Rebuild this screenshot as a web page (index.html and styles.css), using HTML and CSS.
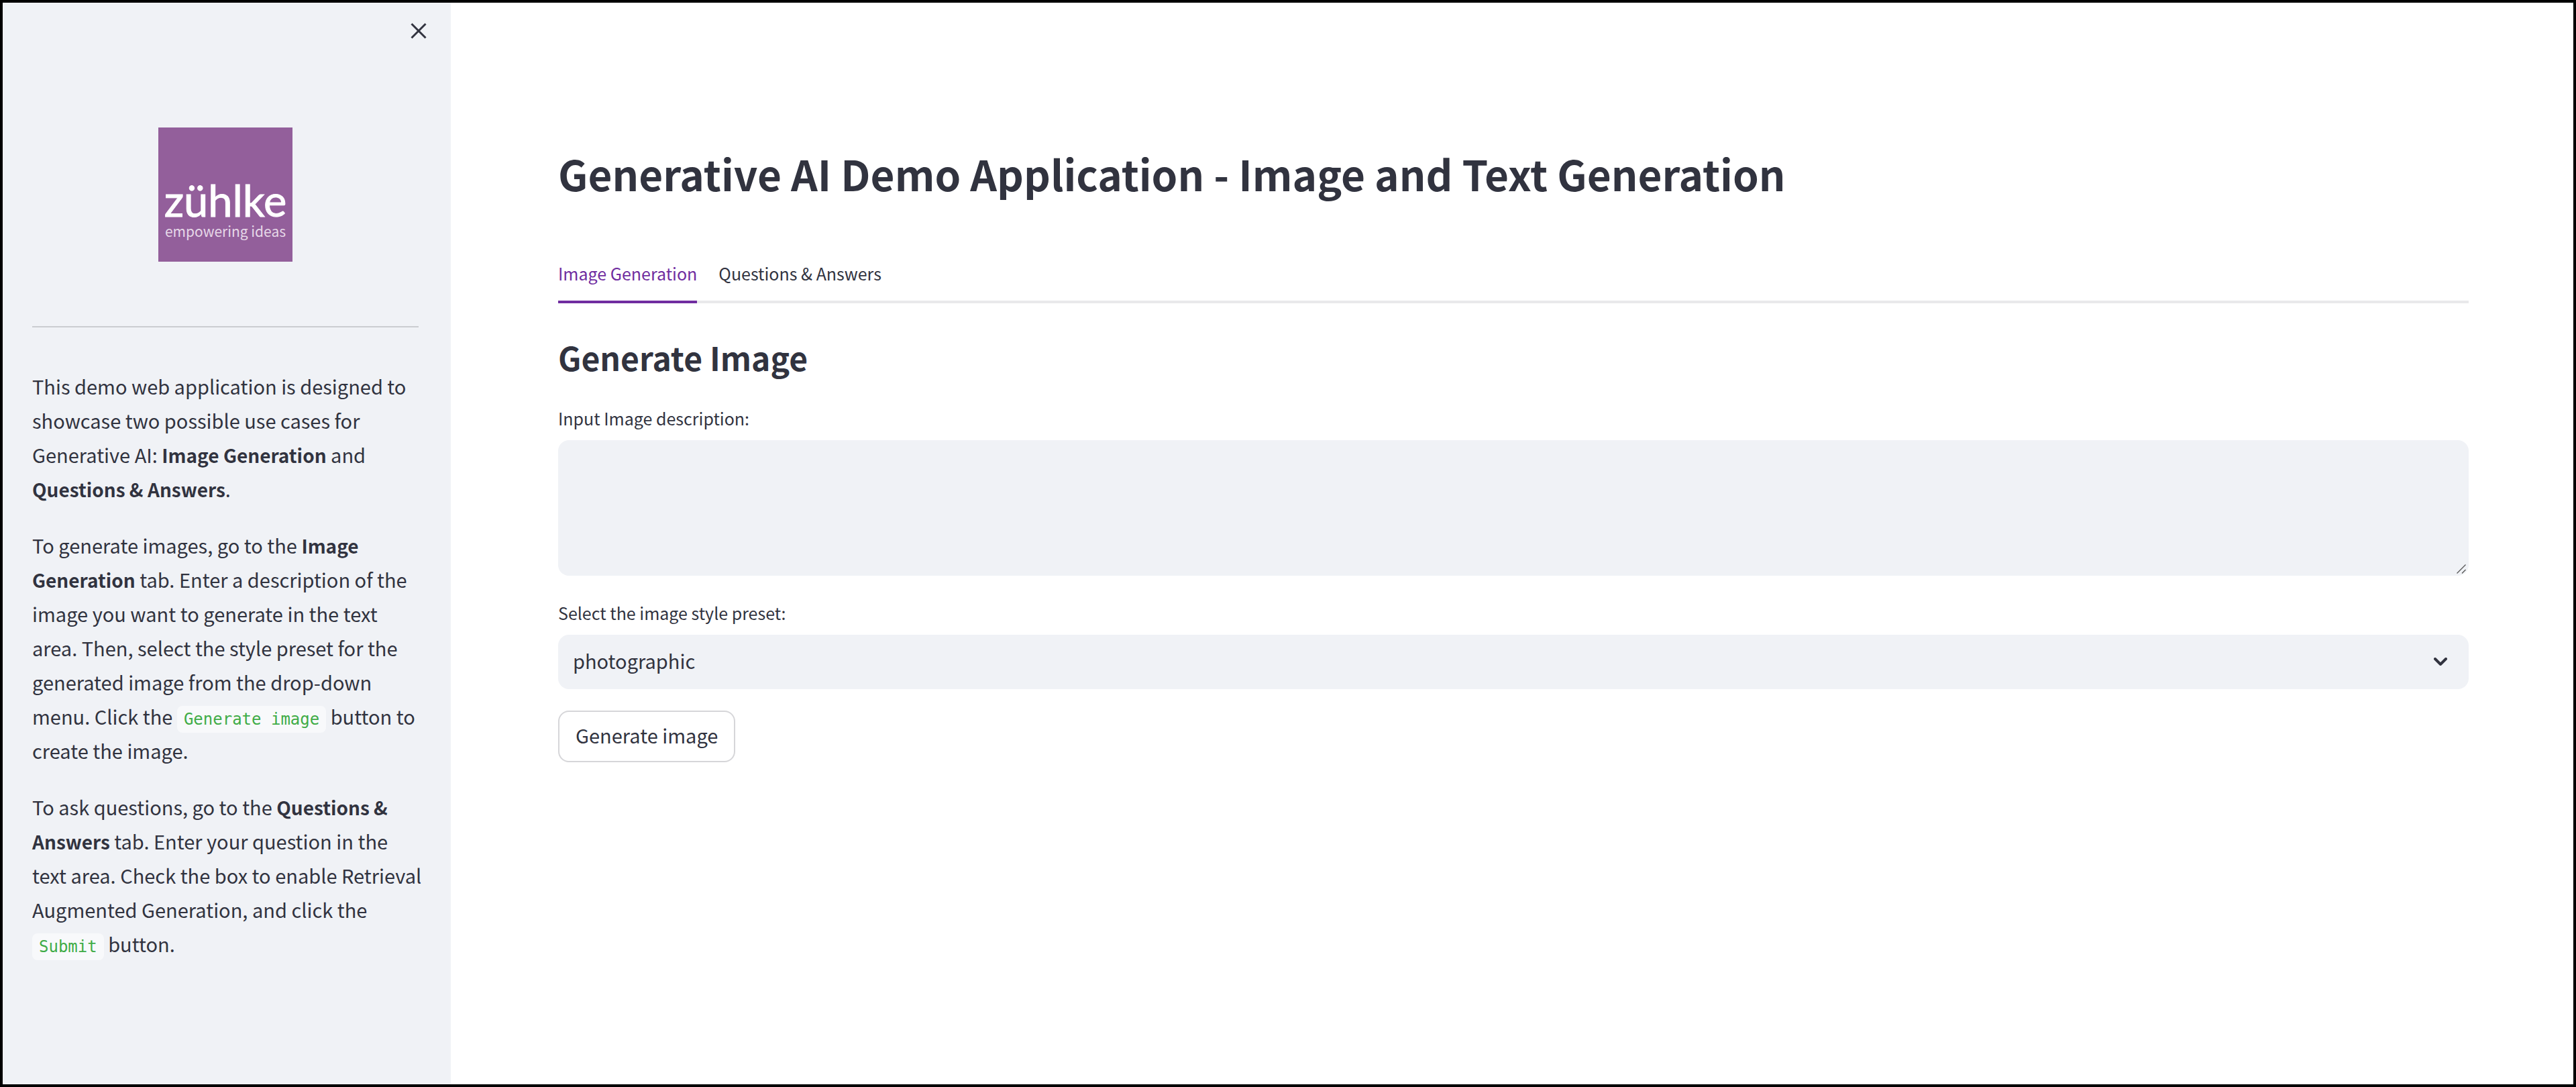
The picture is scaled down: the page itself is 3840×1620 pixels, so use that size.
FILE: index.html
```html
<!DOCTYPE html>
<html lang="en">
<head>
<meta charset="utf-8">
<title>Generative AI Demo Application</title>
<link rel="stylesheet" href="styles.css">
</head>
<body>
<div class="app">
  <aside class="sidebar">
    <button class="close" type="button" aria-label="Close sidebar">
      <svg viewBox="0 0 24 24" width="24" height="24" aria-hidden="true"><path d="M1.500 1.500 22.500 22.500M22.500 1.500 1.500 22.500" fill="none" stroke="currentColor" stroke-width="3"/></svg>
    </button>
    <div class="logo">
      <span class="logo-name">zühlke</span>
      <span class="logo-tagline">empowering ideas</span>
    </div>
    <hr class="divider">
    <div class="intro">
      <p>This demo web application is designed to showcase two possible use cases for Generative AI: <strong>Image Generation</strong> and <strong>Questions &amp; Answers</strong>.</p>
      <p>To generate images, go to the <strong>Image Generation</strong> tab. Enter a description of the image you want to generate in the text area. Then, select the style preset for the generated image from the drop-down menu. Click the <code>Generate image</code> button to create the image.</p>
      <p>To ask questions, go to the <strong>Questions &amp; Answers</strong> tab. Enter your question in the text area. Check the box to enable Retrieval Augmented Generation, and click the <code>Submit</code> button.</p>
    </div>
  </aside>
  <main class="main">
    <h1 class="title">Generative AI Demo Application - Image and Text Generation</h1>
    <div class="tabs" role="tablist">
      <button class="tab tab-active" type="button" role="tab" aria-selected="true">Image Generation</button>
      <button class="tab" type="button" role="tab" aria-selected="false">Questions &amp; Answers</button>
    </div>
    <form class="panel">
      <h2 class="heading">Generate Image</h2>
      <label class="label" for="description">Input Image description:</label>
      <div class="field">
        <textarea class="input area" id="description"></textarea>
        <svg class="grip" viewBox="0 0 14 14" width="14" height="14" aria-hidden="true"><path d="M.5 13.500 13.500.5M8 13.500 13.500 8" fill="none" stroke="#555" stroke-width="1.300"/></svg>
      </div>
      <label class="label" for="preset">Select the image style preset:</label>
      <div class="field">
        <select class="input select" id="preset"><option>photographic</option></select>
        <svg class="chevron" viewBox="0 0 20 12" width="20" height="12" aria-hidden="true"><path d="M2 2 10 10 18 2" fill="none" stroke="currentColor" stroke-width="4" stroke-linecap="round" stroke-linejoin="round"/></svg>
      </div>
      <button class="submit" type="button">Generate image</button>
    </form>
  </main>
</div>
</body>
</html>
```

FILE: styles.css
```css
* {
  box-sizing: border-box;
}

body {
  margin: 0;
  background: #fff;
  color: #31333f;
  font-family: "Noto Sans CJK SC", "Noto Sans", sans-serif;
  font-size: 29px;
  line-height: 51px;
}

button,
select,
textarea {
  margin: 0;
  color: inherit;
  font: inherit;
}

.app {
  display: flex;
  min-height: 100vh;
  border: 4px solid #000;
}

.sidebar {
  display: flex;
  flex: 0 0 668px;
  flex-direction: column;
  padding: 30px 48px 44px 44px;
  background: #f0f2f6;
}

.close {
  display: flex;
  align-self: flex-end;
  margin-right: -12px;
  padding: 0;
  border: 0;
  background: none;
}

.logo {
  display: flex;
  flex-direction: column;
  align-self: center;
  align-items: center;
  width: 200px;
  height: 200px;
  margin-top: 132px;
  padding-top: 72px;
  background: #935f9b;
  color: #fff;
  white-space: nowrap;
}

.logo-name {
  font-family: Lato, sans-serif;
  font-size: 65px;
  line-height: 72px;
  -webkit-text-stroke: 1px currentColor;
}

.logo-tagline {
  color: #e6d8e8;
  font-size: 21px;
  line-height: 20px;
}

.divider {
  width: 100%;
  height: 2px;
  margin: 96px 0 62px;
  border: 0;
  background: #cbccd0;
}

.intro {
  margin-right: -8px;
}

.intro p {
  margin: 0 0 33px;
}

.intro strong {
  font-size: 28px;
  line-height: 40px;
}

.intro code {
  padding: 6px 10px;
  border-radius: 8px;
  background: #f8f9fb;
  color: #3fac47;
  font-family: "DejaVu Sans Mono", monospace;
  font-size: 24px;
  line-height: 24px;
}

.main {
  flex: 1;
  min-width: 0;
  padding: 215px 156px 80px 160px;
}

.title {
  margin: 0 0 90px;
  font-size: 62px;
  line-height: 78px;
}

.tabs {
  display: flex;
  gap: 32px;
  box-shadow: inset 0 -4px #e9e9eb;
}

.tab {
  padding: 0 0 21px;
  border: 0;
  border-bottom: 4px solid transparent;
  background: none;
  font-size: 25px;
  line-height: 40px;
}

.tab-active {
  border-color: #702da0;
  color: #702da0;
}

.panel {
  display: flex;
  flex-direction: column;
  margin-top: 50px;
}

.heading {
  margin: 0 0 41px;
  font-size: 48px;
  line-height: 60px;
}

.label {
  margin-bottom: 13px;
  font-size: 25px;
  line-height: 40px;
}

.field {
  position: relative;
  display: flex;
  margin-bottom: 32px;
}

.field + .label {
  margin-top: 3px;
}

.input {
  width: 100%;
  padding: 0 22px;
  border: 0;
  border-radius: 16px;
  background: #f0f2f6;
}

.area {
  height: 202px;
  padding: 22px;
  resize: none;
}

.grip {
  position: absolute;
  right: 4px;
  bottom: 3px;
}

.select {
  height: 81px;
  padding-bottom: 4px;
  appearance: none;
}

.chevron {
  position: absolute;
  top: 34px;
  right: 32px;
  pointer-events: none;
}

.submit {
  align-self: flex-start;
  padding: 9px 24px 13px;
  border: 2px solid #d6d6d9;
  border-radius: 16px;
  background: #fff;
}
```
